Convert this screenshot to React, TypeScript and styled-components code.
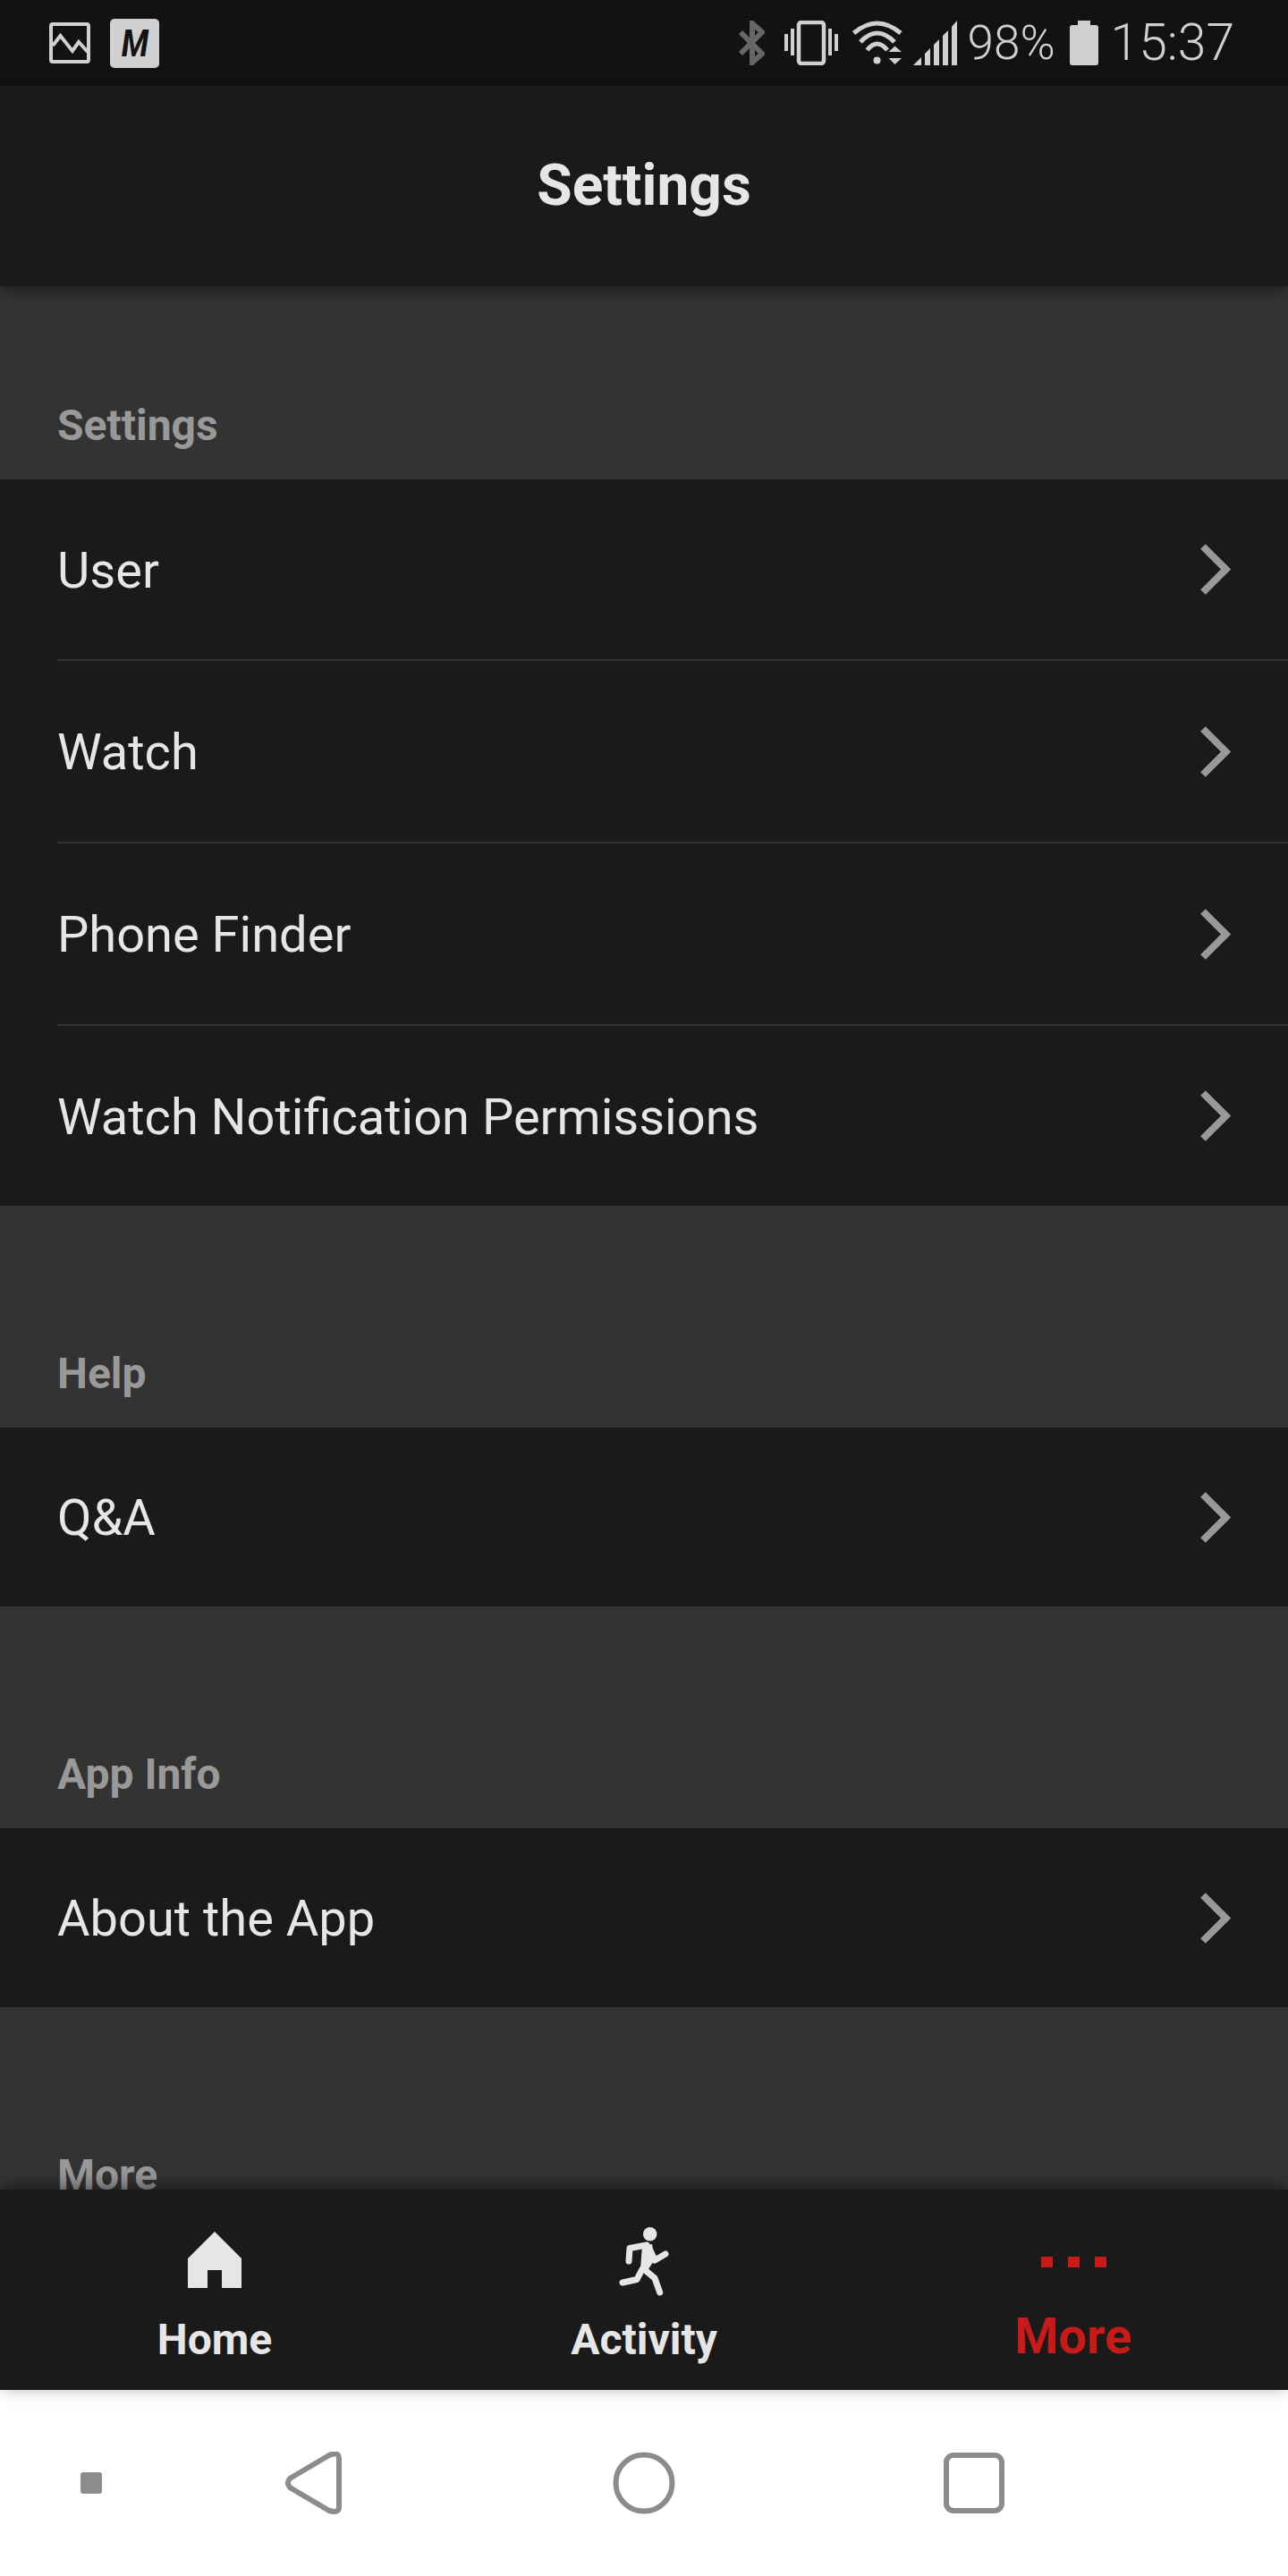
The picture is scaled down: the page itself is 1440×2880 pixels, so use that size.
import styled, { createGlobalStyle } from 'styled-components';

type Section = {
  title: string;
  rows: string[];
};

const sections: Section[] = [
  { title: 'Settings', rows: ['User', 'Watch', 'Phone Finder', 'Watch Notification Permissions'] },
  { title: 'Help', rows: ['Q&A'] },
  { title: 'App Info', rows: ['About the App'] },
  { title: 'More', rows: [] },
];

const Chevron = () => (
  <ChevronIcon viewBox="0 0 34 57">
    <polyline points="3,3 28.5,28.5 3,54" fill="none" stroke="#999999" strokeWidth="8" />
  </ChevronIcon>
);

const App = () => {
  return (
    <Screen>
      <GlobalStyle />
      <StatusBar>
        <StatusGroup>
          <StatusIcon viewBox="0 0 46 46" width="46" height="46">
            <rect x="2" y="2" width="42" height="42" rx="2" fill="none" stroke="#d0d0d0" strokeWidth="4" />
            <polyline points="4,26 12.5,15 26,32 33,22 43,33" fill="none" stroke="#d0d0d0" strokeWidth="4" />
          </StatusIcon>
          <MailBadge>
            <MailLetter>M</MailLetter>
          </MailBadge>
        </StatusGroup>
        <StatusGroup>
          <StatusIcon viewBox="0 0 29 50" width="29" height="50">
            <polyline points="2,13 26,37 15,47 15,3 26,13 2,37" fill="none" stroke="#666666" strokeWidth="6" />
          </StatusIcon>
          <StatusIcon viewBox="0 0 60 50" width="60" height="50" $gap={22}>
            <rect x="16" y="2" width="28" height="46" rx="3" fill="none" stroke="#d0d0d0" strokeWidth="4.5" />
            <g fill="#d0d0d0">
              <rect x="0" y="15" width="4" height="19" />
              <rect x="7" y="9" width="4" height="30" />
              <rect x="49" y="9" width="4" height="30" />
              <rect x="56" y="15" width="4" height="19" />
            </g>
          </StatusIcon>
          <StatusIcon viewBox="0 0 58 50" width="58" height="50" $gap={15}>
            <g fill="none" stroke="#d0d0d0" strokeWidth="5">
              <path d="M2.5 14 Q28.5 -8 55 14" />
              <path d="M10 24 Q28.5 4 48 24" />
              <path d="M17.5 33 Q28.5 19 40 33" />
            </g>
            <g fill="#d0d0d0">
              <circle cx="28.5" cy="44.5" r="4" />
              <polygon points="41.5,35 48.5,28.5 56,35" />
              <polygon points="41.5,42 56,42 48.5,49" />
            </g>
          </StatusIcon>
          <StatusIcon viewBox="0 0 49 50" width="49" height="50" $gap={11}>
            <g fill="#d0d0d0">
              <polygon points="0,50 9,41 9,50" />
              <polygon points="13,50 13,37 19,31 19,50" />
              <polygon points="23,50 23,27 29,21 29,50" />
              <polygon points="33,50 33,17 39,11 39,50" />
              <polygon points="43,50 43,7 49,0 49,50" />
            </g>
          </StatusIcon>
          <StatusText $gap={12} $size={53}>98%</StatusText>
          <StatusIcon viewBox="0 0 32 50" width="32" height="50" $gap={16}>
            <path d="M9 0 H23 V5 H29 Q32 5 32 8 V47 Q32 50 29 50 H3 Q0 50 0 47 V8 Q0 5 3 5 H9 Z" fill="#d0d0d0" />
          </StatusIcon>
          <StatusText $gap={14} $size={57}>15:37</StatusText>
        </StatusGroup>
      </StatusBar>

      <Header>Settings</Header>

      <Scroller>
        {sections.map((section, index) => (
          <div key={section.title}>
            <SectionTitle $first={index === 0}>{section.title}</SectionTitle>
            {section.rows.length > 0 && (
              <List>
                {section.rows.map(row => (
                  <Row key={row} $single={section.rows.length === 1}>
                    <RowLabel>{row}</RowLabel>
                    <Chevron />
                  </Row>
                ))}
              </List>
            )}
          </div>
        ))}
      </Scroller>

      <TabBar>
        <Tab>
          <TabIcon>
            <svg viewBox="0 0 60 68" width="60" height="68">
              <path d="M30 0 L60 30 V63 H38 V43 H22 V63 H0 V30 Z" fill="#e6e6e6" />
            </svg>
          </TabIcon>
          <TabLabel>Home</TabLabel>
        </Tab>
        <Tab>
          <TabIcon>
            <svg viewBox="0 0 56 78" width="56" height="78">
              <circle cx="34.7" cy="7.7" r="7.7" fill="#e6e6e6" />
              <polygon points="26,20 37,19 40,36 31,50 24,47" fill="#e6e6e6" />
              <g fill="none" stroke="#e6e6e6" strokeWidth="7" strokeLinecap="round" strokeLinejoin="round">
                <polyline points="31,20 12,23.5 11,38" />
                <polyline points="35,26 40,37 52,30" />
                <polyline points="26,47 20,58.5 4,62" />
                <polyline points="28,47 40,57 45.7,73" />
              </g>
            </svg>
          </TabIcon>
          <TabLabel>Activity</TabLabel>
        </Tab>
        <Tab>
          <TabIcon>
            <Dots>
              <Dot />
              <Dot />
              <Dot />
            </Dots>
          </TabIcon>
          <TabLabel $active>More</TabLabel>
        </Tab>
      </TabBar>

      <NavBar>
        <PinnedDot />
        <NavButtons>
          <svg viewBox="0 0 70 70" width="70" height="70">
            <path
              d="M8 30 L52 4 Q63 -1 63 8 V62 Q63 69 52 66 L8 40 Q4 35 8 30 Z"
              fill="none"
              stroke="#8c8c8c"
              strokeWidth="6"
              strokeLinejoin="round"
            />
          </svg>
          <svg viewBox="0 0 70 70" width="70" height="70">
            <circle cx="35" cy="35" r="31.5" fill="none" stroke="#8c8c8c" strokeWidth="6" />
          </svg>
          <svg viewBox="0 0 70 70" width="70" height="70">
            <rect x="4" y="4" width="62" height="62" rx="8" fill="none" stroke="#8c8c8c" strokeWidth="6" />
          </svg>
        </NavButtons>
      </NavBar>
    </Screen>
  );
};

export default App;

const GlobalStyle = createGlobalStyle`
  html, body {
    margin: 0;
    padding: 0;
    background: #333333;
  }
  * {
    box-sizing: border-box;
  }
`;

const Screen = styled.div`
  width: 1440px;
  height: 2880px;
  display: flex;
  flex-direction: column;
  font-family: Roboto, "Liberation Sans", sans-serif;
  background: #333333;
  overflow: hidden;
`;

const StatusBar = styled.div`
  height: 96px;
  flex: none;
  display: flex;
  justify-content: space-between;
  align-items: center;
  padding: 0 60px 0 55px;
  background: #121212;
`;

const StatusGroup = styled.div`
  display: flex;
  align-items: center;
  gap: 22px;
  &:last-child {
    gap: 0;
  }
`;

const StatusIcon = styled.svg<{ $gap?: number }>`
  display: block;
  flex: none;
  margin-left: ${p => p.$gap ?? 0}px;
`;

const MailBadge = styled.div`
  width: 55px;
  height: 55px;
  display: flex;
  align-items: center;
  justify-content: center;
  border-radius: 5px;
  background: #d0d0d0;
  color: #121212;
  font-size: 42px;
  font-weight: 700;
  font-style: italic;
`;

const MailLetter = styled.span`
  display: inline-block;
  transform: scaleX(0.85);
`;

const StatusText = styled.span<{ $gap?: number; $size: number }>`
  margin-left: ${p => p.$gap ?? 0}px;
  color: #d0d0d0;
  font-size: ${p => p.$size}px;
  font-weight: 300;
  line-height: 60px;
`;

const Header = styled.div`
  position: relative;
  z-index: 2;
  height: 224px;
  flex: none;
  display: flex;
  align-items: center;
  justify-content: center;
  padding-bottom: 2px;
  background: #1a1a1a;
  color: #e6e6e6;
  font-size: 64px;
  font-weight: 700;
  box-shadow: 0 4px 20px -3px rgba(0, 0, 0, 0.6);
`;

const Scroller = styled.div`
  flex: 1;
  min-height: 0;
  overflow: hidden;
  background: #333333;
`;

const SectionTitle = styled.div<{ $first?: boolean }>`
  height: ${p => (p.$first ? 216 : 248)}px;
  display: flex;
  align-items: flex-end;
  padding: 0 0 32px 64px;
  color: #999999;
  font-size: 48px;
  font-weight: 700;
  line-height: 56px;
`;

const List = styled.div`
  background: #1a1a1a;
`;

const Row = styled.div<{ $single?: boolean }>`
  height: ${p => (p.$single ? 200 : 204)}px;
  display: flex;
  align-items: center;
  justify-content: space-between;
  margin-left: 64px;
  padding-right: 64px;
  color: #e6e6e6;
  font-size: 56px;
  border-bottom: 2px solid #333333;

  &:first-child {
    height: ${p => (p.$single ? 200 : 203)}px;
  }
  &:last-child {
    height: ${p => (p.$single ? 200 : 201)}px;
    border-bottom: none;
  }
`;

const RowLabel = styled.span`
  padding-top: 2px;
`;

const ChevronIcon = styled.svg`
  display: block;
  flex: none;
  width: 34px;
  height: 57px;
`;

const TabBar = styled.div`
  position: relative;
  z-index: 2;
  height: 224px;
  flex: none;
  display: grid;
  grid-template-columns: repeat(3, 1fr);
  padding-top: 42px;
  background: #1a1a1a;
  box-shadow: 0 -4px 20px -3px rgba(0, 0, 0, 0.6);
`;

const Tab = styled.div`
  display: flex;
  flex-direction: column;
  align-items: center;
`;

const TabIcon = styled.div`
  height: 78px;
  display: flex;
  align-items: center;
  justify-content: center;
  svg {
    display: block;
  }
`;

const TabLabel = styled.div<{ $active?: boolean }>`
  margin-top: ${p => (p.$active ? 16 : 20)}px;
  color: ${p => (p.$active ? '#c91a1a' : '#e6e6e6')};
  font-size: ${p => (p.$active ? 56 : 48)}px;
  font-weight: 700;
  line-height: 56px;
`;

const Dots = styled.div`
  display: flex;
  gap: 17px;
`;

const Dot = styled.div`
  width: 13px;
  height: 12px;
  background: #c91a1a;
`;

const NavBar = styled.div`
  height: 208px;
  flex: none;
  display: flex;
  align-items: center;
  padding-left: 90px;
  background: #ffffff;
`;

const PinnedDot = styled.div`
  width: 24px;
  height: 24px;
  border-radius: 3px;
  background: #8c8c8c;
`;

const NavButtons = styled.div`
  display: flex;
  gap: 299px;
  margin-left: 202px;
  svg {
    display: block;
  }
`;
